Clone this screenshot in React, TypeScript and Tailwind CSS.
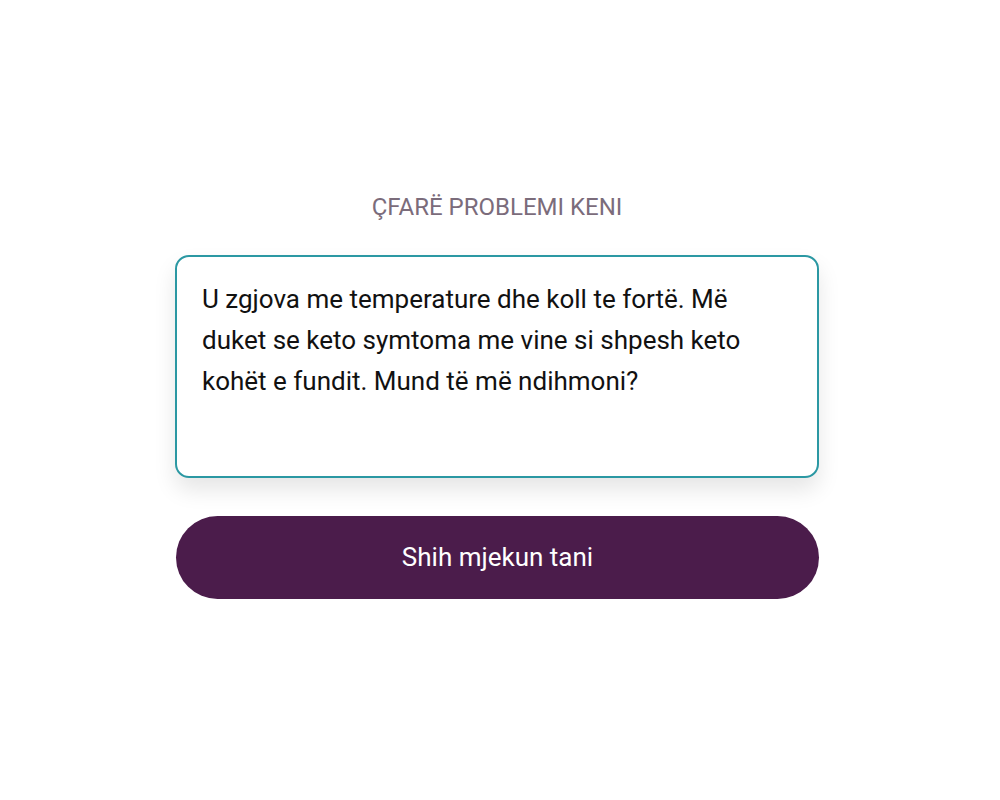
export default function App() {
  return (
    <div className="min-h-[800px] w-[1000px] bg-white font-['Roboto',sans-serif]">
      <div className="ml-[175px] flex w-[644px] flex-col pt-[193px]">
        <p className="text-center text-[24px] leading-[28px] text-[#7b6c7b]">
          ÇFARË PROBLEMI KENI
        </p>
        <div className="mt-[34px] h-[223px] rounded-[14px] border-2 border-[#2b98a3] bg-white px-[25px] pt-[22px] shadow-[0_12px_22px_rgba(0,0,0,0.1)]">
          <p className="text-[26px] leading-[41px] text-[#111]">
            U zgjova me temperature dhe koll te fortë. Më duket se keto symtoma
            me vine si shpesh keto kohët e fundit. Mund të më ndihmoni?
          </p>
        </div>
        <button className="mt-[38px] ml-[1px] h-[83px] rounded-full bg-[#4b1c4b] text-[26px] text-white">
          Shih mjekun tani
        </button>
      </div>
    </div>
  );
}
